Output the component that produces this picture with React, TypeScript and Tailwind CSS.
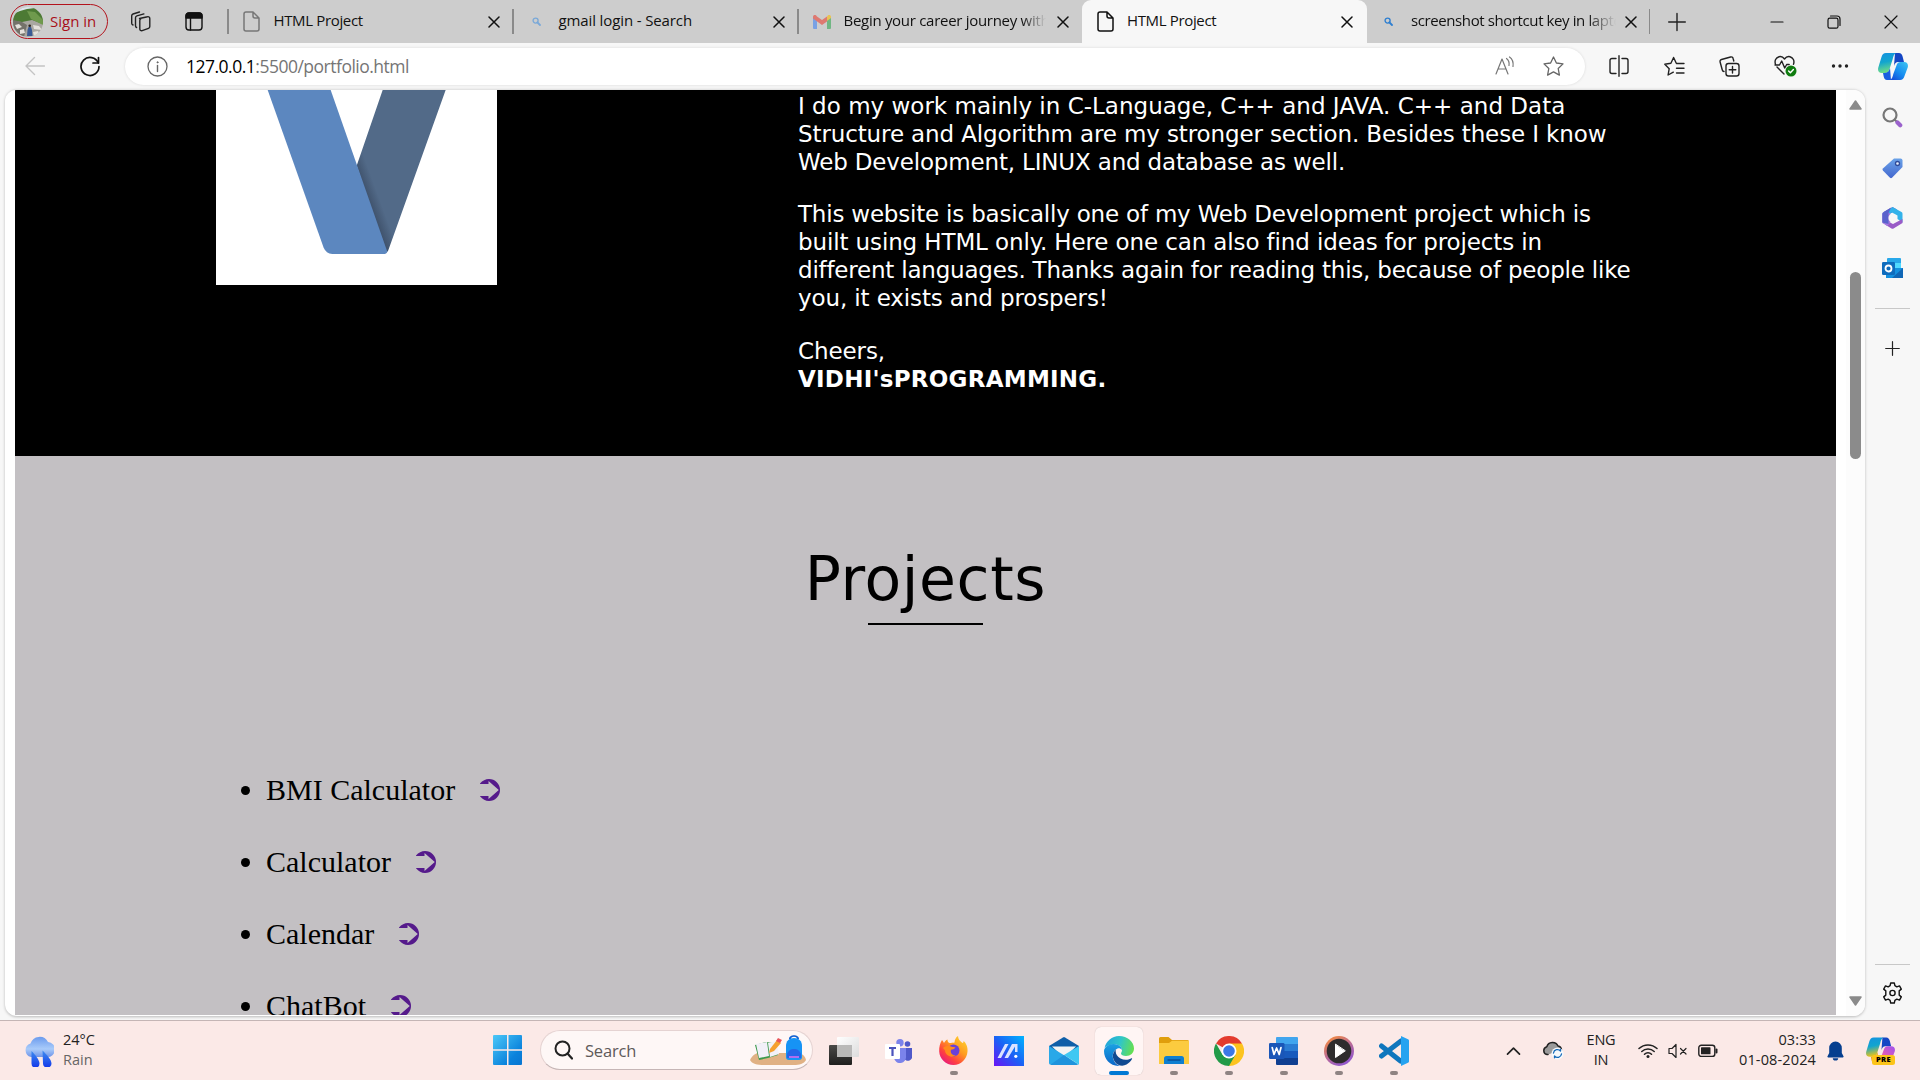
import React from "react";

type P = { children?: React.ReactNode; w?: number; h?: number; vb?: string; className?: string };

const Svg = ({ children, w = 20, h = 20, vb, className = "" }: P) => (
  <svg
    width={w}
    height={h}
    viewBox={vb ?? `0 0 ${w} ${h}`}
    fill="none"
    stroke="currentColor"
    strokeWidth="1.4"
    strokeLinecap="round"
    strokeLinejoin="round"
    className={"block shrink-0 " + className}
  >
    {children}
  </svg>
);

const CloseX = () => (
  <Svg w={12} h={12} className="text-[#111]">
    <path d="M1 1l10 10M11 1L1 11" strokeWidth="1.5" />
  </Svg>
);

const DocIcon = ({ className = "" }: { className?: string }) => (
  <Svg w={17} h={21} className={className}>
    <path d="M3 1h7l6 6v11a2 2 0 0 1-2 2H3a2 2 0 0 1-2-2V3a2 2 0 0 1 2-2z M10 1v4a2 2 0 0 0 2 2h4" strokeWidth="1.5" />
  </Svg>
);

const MiniSearch = ({ className = "" }: { className?: string }) => (
  <Svg w={9} h={9} className={className}>
    <circle cx="3.6" cy="3.6" r="2.5" />
    <path d="M5.5 5.5L8 8" strokeWidth="1.8" />
  </Svg>
);

const Gmail = () => (
  <Svg w={18} h={14} className="opacity-60">
    <g stroke="none">
      <path d="M0 2v11a1 1 0 0 0 1 1h3V5z" fill="#4285f4" />
      <path d="M14 5v9h3a1 1 0 0 0 1-1V2z" fill="#34a853" />
      <path d="M14 1.5V6l4-3V2c0-2-2-2.500-3.200-1.500z" fill="#fbbc04" />
      <path d="M4 1.500L9 5l5-3.500V6.500L9 10 0 3.500V2C0 0 2-.5 3.200.5z" fill="#ea4335" />
    </g>
  </Svg>
);

const Sep = () => <div className="h-[25px] w-[1.5px] shrink-0 bg-[#8a8a8a]" />;

function TabStrip() {
  return (
    <div className="flex h-[43px] items-center bg-[#cdcdcd] text-[15px] leading-[20px] text-[#111]">
      <div className="flex w-[227px] shrink-0 items-center pl-[10px]">
        <div className="mr-[22px] flex h-[35px] w-[98px] items-center rounded-full border-[1.5px] border-[#b3131d] pl-[2px] text-[#a80f1a]">
          <Svg w={30} h={30}>
            <clipPath id="av"><circle cx="15" cy="15" r="15" /></clipPath>
            <g clipPath="url(#av)" stroke="none">
              <path d="M0 0h30v30H0z" fill="#a9a7a1" />
              <path d="M0 0h30v8l-8-5-9 3-7 4-6-3z" fill="#dde6ee" />
              <path d="M0 7l7-3 7-2 8-1 8 7v9L19 13 9 15 0 14z" fill="#4c7a34" />
              <path d="M14 4l8 1 8 8v5l-12-6z" fill="#6f9a4d" />
              <path d="M0 13l9 2 5 3-3 12H0z" fill="#74726a" />
              <path d="M2 18l4-1 3 3-5 2z M7 23l4-1 1 4-5 1z M20 18l6 1 3 4-8-1z M20 25l5-1 2 4-6 1z" fill="#e4e1dc" />
              <path d="M15.500 20h2.500l1 3 .5 6h-5.500l.5-6z" fill="#3a5a94" />
              <circle cx="16.700" cy="18.800" r="1.300" fill="#2b211c" />
            </g>
          </Svg>
          <span className="mt-[-2px] ml-[7px] tracking-[0px]">Sign in</span>
        </div>
        <Svg w={22} h={22} className="mr-[33px] text-[#222]">
          <path d="M9.500 7.500l8-1.800a1.800 1.800 0 0 1 2.300 1.700v8.100a2 2 0 0 1-1.300 1.900l-6.300 2.300a1.800 1.800 0 0 1-2.400-1.700V9.500a2 2 0 0 1 1.300-1.900z M6.600 16.500a2 2 0 0 1-1.100-1.800V6.800a2 2 0 0 1 1.400-1.900l7-2 M3 14a2 2 0 0 1-1.300-1.800V4.800A2 2 0 0 1 3 3l6.500-2" />
        </Svg>
        <Svg w={18} h={19} className="text-[#111]">
          <rect x="1" y="1" width="16" height="17" rx="3" />
          <path d="M1 6V4a3 3 0 0 1 3-3h10a3 3 0 0 1 3 3v2z" fill="currentColor" />
          <path d="M5.500 6v12" />
        </Svg>
      </div>
      <Sep />
      <div className="flex w-[283.500px] shrink-0 items-center pl-[14px]">
        <DocIcon className="text-[#777]" />
        <span className="mt-[-3px] ml-[14px] w-[214px] shrink-0 tracking-[-0.35px]">HTML Project</span>
        <CloseX />
      </div>
      <Sep />
      <div className="flex w-[283.500px] shrink-0 items-center pl-[18px]">
        <MiniSearch className="text-[#7ba9d8]" />
        <span className="mt-[-3px] ml-[18px] w-[214px] shrink-0 tracking-[-0.12px]">gmail login - Search</span>
        <CloseX />
      </div>
      <Sep />
      <div className="flex w-[283.500px] shrink-0 items-center pl-[14px]">
        <Gmail />
        <span className="mt-[-3px] mr-[11px] ml-[13px] w-[202px] shrink-0 overflow-hidden [mask-image:linear-gradient(to_right,black_88%,transparent)] whitespace-nowrap tracking-[-0.29px]">
          Begin your career journey with us
        </span>
        <CloseX />
      </div>
      <div className="flex h-[43px] w-[285px] shrink-0 items-center rounded-t-[9px] bg-[#f7f7f7] pl-[15px]">
        <DocIcon className="text-[#111]" />
        <span className="mt-[-3px] ml-[13px] w-[214px] shrink-0 tracking-[-0.35px]">HTML Project</span>
        <CloseX />
      </div>
      <div className="flex w-[281.500px] shrink-0 items-center pl-[17px]">
        <MiniSearch className="text-[#2f7fd0]" />
        <span className="mt-[-3px] mr-[9px] ml-[18px] w-[205px] shrink-0 overflow-hidden [mask-image:linear-gradient(to_right,black_86%,transparent)] whitespace-nowrap tracking-[-0.4px]">
          screenshot shortcut key in laptop
        </span>
        <CloseX />
      </div>
      <Sep />
      <Svg w={18} h={20} className="ml-[18px] text-[#222]"><path d="M9 1.500v17M.7 10h16.600" /></Svg>
      <Svg w={14} h={14} className="ml-[84px] text-[#111]"><path d="M1 7h12" strokeWidth="1.200" /></Svg>
      <Svg w={14} h={14} className="ml-[43px] text-[#111]">
        <rect x="1" y="3.200" width="10" height="10" rx="1.800" strokeWidth="1.200" />
        <path d="M3.500 1h6.500a3 3 0 0 1 3 3v6.500" strokeWidth="1.200" />
      </Svg>
      <Svg w={14} h={14} className="ml-[43px] text-[#111]"><path d="M1 1l12 12M13 1L1 13" strokeWidth="1.200" /></Svg>
    </div>
  );
}

const Copilot = ({ w = 30, h = 27, warm = false }: { w?: number; h?: number; warm?: boolean }) => {
  const id = warm ? "w" : "c";
  return (
    <Svg w={w} h={h} vb="0 0 30 27">
      <defs>
        <linearGradient id={"cpa" + id} x1="0" y1="0" x2=".2" y2="1">
          <stop offset="0" stopColor="#1491e0" />
          <stop offset=".5" stopColor="#12a5cf" />
          <stop offset="1" stopColor={warm ? "#e8c41a" : "#6fdc86"} />
        </linearGradient>
        <linearGradient id={"cpb" + id} x1="1" y1="0" x2=".2" y2="1">
          <stop offset="0" stopColor={warm ? "#9b53f0" : "#3fc6f2"} />
          <stop offset=".6" stopColor={warm ? "#e25ab8" : "#168cf0"} />
          <stop offset="1" stopColor={warm ? "#f58a4a" : "#1550d8"} />
        </linearGradient>
      </defs>
      <g stroke="none">
        <path d="M17 0h4c2 0 3 1.500 3.600 3.500L26 9h-6c-2 0-3 1-4 4z" fill="#1546c4" />
        <path d="M8 0h10c-2 1-2.600 3-3.300 6l-3 9.500c-.8 2.500-1.700 4.500-5 4.500H4c-3.500 0-4.500-2.500-3.700-5.500L3.500 4C4.300 1.500 5.500 0 8 0z" fill={`url(#cpa${id})`} />
        <path d="M13 27H9c-2 0-2.800-1.500-3.300-3.500L5 20c5 0 6-2 7-5z" fill={warm ? "#e8a22a" : "#1a5de0"} />
        <path d="M22 27H12c2-1 2.600-3 3.300-6l3-8c.8-2.500 1.700-4 4.500-4H26c3.500 0 4.500 2.500 3.700 5.500L26.500 23c-.8 2.500-2 4-4.500 4z" fill={`url(#cpb${id})`} />
      </g>
    </Svg>
  );
};

function Toolbar() {
  return (
    <div className="flex h-[46px] items-center bg-[#f7f7f7] pl-[25px] text-[#222]">
      <Svg w={20} h={20} className="mr-[35px] text-[#c4c4c4]"><path d="M19.500 10H1M9.500 1.500L1 10l8.500 8.500" /></Svg>
      <Svg w={20} h={22} className="mr-[25px] text-[#111]">
        <path d="M18.300 8A9 9 0 1 0 19 11.500" strokeWidth="1.700" />
        <path d="M18.500 2.500V8h-5.500" strokeWidth="1.700" />
      </Svg>
      <div className="flex h-[37px] w-[1460px] shrink-0 items-center rounded-full bg-white pl-[22px] shadow-[0_0_3px_rgba(0,0,0,0.12)]">
        <Svg w={21} h={21} className="text-[#666]">
          <circle cx="10.500" cy="10.500" r="9.500" strokeWidth="1.300" />
          <path d="M10.500 9.500v6" />
          <circle cx="10.500" cy="6.300" r=".6" fill="currentColor" strokeWidth=".8" />
        </Svg>
        <div className="ml-[18px] w-[1309px] shrink-0 text-[17.500px] leading-[24px] tracking-[-0.5px] text-[#757575]">
          <span className="text-black">127.0.0.1</span>:5500/portfolio.html
        </div>
        <Svg w={20} h={20} className="text-[#777]">
          <path d="M1 18L7 3l6 15M3 13h8M11.500 2.500c2 1.500 3 4 2.500 7M14.500 1c3 2 4 5.500 3.500 9.500" strokeWidth="1.200" />
        </Svg>
        <Svg w={21} h={20} className="ml-[28px] text-[#666]">
          <path d="M10.500 1l2.900 6 6.600.9-4.800 4.600 1.200 6.600-5.900-3.200-5.900 3.200 1.200-6.600L1 7.900 7.600 7z" strokeWidth="1.300" />
        </Svg>
      </div>
      <Svg w={20} h={22} className="ml-[24px]">
        <path d="M7 3.500H3a2 2 0 0 0-2 2v11a2 2 0 0 0 2 2h4M13 3.500h4a2 2 0 0 1 2 2v11a2 2 0 0 1-2 2h-4M10 .8v20.400" />
      </Svg>
      <Svg w={21} h={21} className="ml-[35px]">
        <path d="M12.300 7.200L9.600 1.500 6.900 7.200.8 8.200l4.400 4.500-1.100 6.300 5.200-2.800M12.500 7.500h7.500M12.500 12.200h7.500M12.500 17h7.500" />
      </Svg>
      <Svg w={21} h={21} className="ml-[34px]">
        <rect x="7" y="7.500" width="13" height="12.500" rx="2.500" />
        <path d="M13.500 10.500v6.500M10.200 13.700h6.600M14.800 5l-.7-2.500a2 2 0 0 0-2.500-1.500L2.500 3.500A2 2 0 0 0 1.100 6l2.200 8a2 2 0 0 0 1.700 1.500" />
      </Svg>
      <Svg w={23} h={22} className="ml-[34px]">
        <path d="M1.500 9.500C.3 6 1.800 2.500 5 1.700c2.200-.6 4.200.5 5.500 2.300 1.300-1.800 3.300-2.900 5.500-2.300 3.200.8 4.700 4.300 3.500 7.600M3 12l7 7M1 10h4.500l2.200-4 3 7 2-3.500h2.500" />
        <circle cx="17" cy="16" r="5.500" fill="#107c10" stroke="none" />
        <path d="M14.600 16l1.800 1.800 3-3.300" stroke="#fff" />
      </Svg>
      <Svg w={18} h={6} className="ml-[34px]">
        <g fill="#222" stroke="none"><circle cx="2.500" cy="3" r="1.700" /><circle cx="9" cy="3" r="1.700" /><circle cx="15.500" cy="3" r="1.700" /></g>
      </Svg>
      <div className="ml-[29px]"><Copilot /></div>
    </div>
  );
}

const projects = ["BMI Calculator", "Calculator", "Calendar", "ChatBot"];

function PortfolioPage() {
  return (
    <div className="h-[925px] w-[1821px] shrink-0 overflow-hidden bg-[#c3c0c3]">
      <section className="flex h-[366px] items-start bg-black pl-[201px]">
        <svg width="281" height="195" viewBox="48 30 843 585" className="block shrink-0 bg-white">
          <defs>
            <linearGradient id="fold" gradientUnits="userSpaceOnUse" x1="515" y1="385" x2="545" y2="374">
              <stop offset="0" stopColor="#40536d" />
              <stop offset="1" stopColor="#526a88" />
            </linearGradient>
          </defs>
          <path d="M548 30H737L566 508Q563 518 556 518L470 257z" fill="url(#fold)" />
          <path d="M203 30H392L562 515Q560 522 550 522H397Q378 520 371 503z" fill="#5c87bf" />
        </svg>
        <div className="ml-[301px] pt-[2px] text-[23px] leading-[28px] whitespace-nowrap text-white [font-family:'DejaVu_Sans',sans-serif]">
          <div className="mb-[24px]">
            <p className="tracking-[0.01px]">I do my work mainly in C-Language, C++ and JAVA. C++ and Data</p>
            <p className="tracking-[-0.12px]">Structure and Algorithm are my stronger section. Besides these I know</p>
            <p className="tracking-[-0.17px]">Web Development, LINUX and database as well.</p>
          </div>
          <div className="mb-[25px]">
            <p className="tracking-[-0.2px]">This website is basically one of my Web Development project which is</p>
            <p className="tracking-[-0.12px]">built using HTML only. Here one can also find ideas for projects in</p>
            <p className="tracking-[-0.21px]">different languages. Thanks again for reading this, because of people like</p>
            <p className="tracking-[-0.12px]">you, it exists and prospers!</p>
          </div>
          <p className="tracking-[-0.1px]">Cheers,</p>
          <p className="font-bold tracking-[0.25px]">VIDHI'sPROGRAMMING.</p>
        </div>
      </section>
      <section>
        <div className="flex flex-col items-center pt-[86px]">
          <h1 className="text-[60px] leading-[74px] tracking-[0.6px] [font-family:'DejaVu_Sans',sans-serif]">Projects</h1>
          <div className="mt-[7px] h-[2px] w-[115px] bg-black" />
        </div>
        <ul className="pt-[129px] pl-[228px] text-[30px] leading-[72px] text-black [font-family:'Liberation_Serif',serif]">
          {projects.map((p) => (
            <li key={p} className="flex h-[72px] items-center">
              <span className="mt-[1px] mr-[16px] ml-[-2px] size-[9px] rounded-full bg-black" />
              <span>{p}</span>
              <a className="mt-[-1px] ml-[25px] text-[#551a8b]">
                <Svg w={20} h={22}>
                  <path d="M0 4.500C2.500 1.500 5.500 0 9 0A11 11 0 0 1 9 22C5.500 22 2.500 20.500 0 17.300V17H8.500V20L18.800 11 8.500 2V4.900H0z" fill="currentColor" stroke="none" />
                </Svg>
              </a>
            </li>
          ))}
        </ul>
      </section>
    </div>
  );
}

function Sidebar() {
  return (
    <div className="flex h-[931px] w-[54px] shrink-0 flex-col items-center pt-[18px] text-[#222]">
      <Svg w={21} h={21}>
        <circle cx="8" cy="8" r="6.500" stroke="#777" strokeWidth="2.200" />
        <path d="M12.800 12.800l2 2" stroke="#777" strokeWidth="2" />
        <path d="M15.500 15.500l2.700 2.700" stroke="#9b62cc" strokeWidth="4.200" />
      </Svg>
      <Svg w={21} h={21} className="mt-[30px]">
        <defs><linearGradient id="tg" x1="0" y1="0" x2="0" y2="1"><stop offset="0" stopColor="#6aa2e8" /><stop offset="1" stopColor="#4468cf" /></linearGradient></defs>
        <path d="M12 .5h6.500a2 2 0 0 1 2 2V9L10 19.700a1.500 1.500 0 0 1-2 0L.9 12.600a1.500 1.500 0 0 1 0-2z" fill="url(#tg)" stroke="none" />
        <circle cx="15.500" cy="5.500" r="2" fill="#e8f0fb" stroke="#2f4a99" strokeWidth="1.300" />
      </Svg>
      <Svg w={21} h={22} className="mt-[28px]">
        <g stroke="none">
          <path d="M10.500 0L1.500 5v11l4.500 3V8l4.500-2.800L15 2.500z" fill="#6468cf" />
          <path d="M10.500 0l9 5a2 2 0 0 1 1 2v8.500l-5-3.500V8.500L10 5.500 7 7V3z" fill="#33b2ea" />
          <path d="M20.500 12v4l-9 5.500a2 2 0 0 1-2 0L3 17.500l5-2 3 1.500z" fill="#9a5bc7" />
          <path d="M.3 7v9l5 3 3-3.500V7L5 3.500z" fill="#a67be0" />
          <path d="M.3 6L9 .5 6.500 6v11L.3 15.500z" fill="#5a62cc" />
          <circle cx="10.500" cy="11" r="4" fill="#f7f7f7" />
        </g>
      </Svg>
      <Svg w={21} h={21} className="mt-[29px]">
        <g stroke="none">
          <rect x="5" y="0" width="14" height="16" rx="1" fill="#28a8ea" />
          <path d="M5 5h7v5H5z" fill="#0364b8" /><path d="M12 5h7v6h-7z" fill="#50d9ff" />
          <path d="M4 10h17v10H4z" fill="#1490df" /><path d="M10 20L21 10v10z" fill="#1066b5" />
          <rect x="0" y="4" width="13" height="13" rx="1.300" fill="#0f6cbd" />
        </g>
        <circle cx="6.500" cy="10.500" r="3" stroke="#fff" strokeWidth="1.800" />
      </Svg>
      <div className="mt-[29px] h-px w-[35px] bg-[#c8c8c8]" />
      <Svg w={15} h={15} className="mt-[32px]"><path d="M7.500 .7v13.600M.7 7.500h13.600" strokeWidth="1.200" /></Svg>
      <div className="mt-auto h-px w-[35px] shrink-0 bg-[#c8c8c8]" />
      <Svg w={21} h={22} vb="0 0 21 22" className="mt-[17px] mb-[16px] text-[#111]">
        <path d="M8.700 1h3.600l.6 2.700 1.900 1.100 2.700-.9 1.800 3.200-2.100 1.800v4.200l2.100 1.800-1.800 3.200-2.700-.9-1.900 1.100-.6 2.700H8.700l-.6-2.700-1.900-1.100-2.700.9-1.800-3.200 2.100-1.800V8.900L1.700 7.100l1.800-3.200 2.700.9 1.900-1.100z" />
        <circle cx="10.500" cy="11" r="2.600" />
      </Svg>
    </div>
  );
}

function Browser() {
  return (
    <div className="flex h-[931px] bg-[#f7f7f7] pl-[5px]">
      <div className="flex h-[927px] w-[1860px] shrink-0 overflow-hidden rounded-[12px] border-t border-[#e3e3e3] bg-white pl-[10px] shadow-[0_1px_3px_rgba(0,0,0,0.25)]">
        <PortfolioPage />
        <div className="ml-[10px] flex w-[19px] shrink-0 flex-col items-center bg-[#fcfcfc] pt-[10px]">
          <Svg w={13} h={10}><path d="M6.500 1L12 9H1z" fill="#8b8b8b" stroke="#8b8b8b" strokeWidth="1.500" /></Svg>
          <div className="mt-[162px] h-[187px] w-[11px] rounded-full bg-[#8b8b8b]" />
          <Svg w={13} h={10} className="mt-auto mb-[10px]"><path d="M6.500 9L1 1h11z" fill="#8b8b8b" stroke="#8b8b8b" strokeWidth="1.500" /></Svg>
        </div>
      </div>
      <Sidebar />
    </div>
  );
}

const TaskIcon = ({ children, run = false, active = false }: { children: React.ReactNode; run?: boolean; active?: boolean }) => (
  <div className="flex w-[55px] shrink-0 justify-center">
    <div className={active ? "flex h-[48px] w-[48px] flex-col items-center rounded-[6px] bg-[#fff5f4] pt-[9px] shadow-[0_0_1px_rgba(0,0,0,0.25)]" : "flex h-[48px] w-[48px] flex-col items-center pt-[9px]"}>
      <div className="flex h-[30px] items-center">{children}</div>
      {active ? <div className="mt-[5px] h-[4px] w-[20px] shrink-0 rounded-full bg-[#0078d4]" /> : null}
      {run ? <div className="mt-[5px] h-[4px] w-[8px] shrink-0 rounded-full bg-[#8f8483]" /> : null}
    </div>
  </div>
);

function Pinned() {
  return (
    <>
      <TaskIcon>
        <Svg w={30} h={28}>
          <defs>
            <linearGradient id="tv" x1="0" y1="0" x2="0" y2="1"><stop offset="0" stopColor="#4a4a48" /><stop offset="1" stopColor="#1f1f1e" /></linearGradient>
            <linearGradient id="tv2" x1="0" y1="0" x2="1" y2="1"><stop offset="0" stopColor="#fff" /><stop offset="1" stopColor="#dcdcdc" /></linearGradient>
          </defs>
          <g stroke="none">
            <rect x="0" y="8" width="23" height="20" rx="1" fill="url(#tv)" />
            <rect x="8" y="0" width="22" height="20" rx="1" fill="url(#tv2)" />
            <rect x="8" y="8" width="15" height="12" fill="#b9b9b8" />
          </g>
        </Svg>
      </TaskIcon>
      <TaskIcon>
        <Svg w={27} h={24}>
          <g stroke="none">
            <circle cx="22.500" cy="5" r="2.800" fill="#5059c9" />
            <path d="M19 9h8v7a4 4 0 0 1-8 3z" fill="#5059c9" />
            <circle cx="15" cy="3.700" r="3.700" fill="#7b83eb" />
            <path d="M9 9h12v8a6 6 0 0 1-12 2z" fill="#7b83eb" />
            <rect x="0" y="5" width="15" height="15" rx="1" fill="#fff" />
          </g>
          <path d="M4 9h7M7.500 9v8" stroke="#4b53bc" strokeWidth="2.200" strokeLinecap="butt" />
        </Svg>
      </TaskIcon>
      <TaskIcon run>
        <Svg w={29} h={29}>
          <defs>
            <linearGradient id="ff" x1="1" y1="0" x2=".2" y2="1"><stop offset="0" stopColor="#ffe033" /><stop offset=".45" stopColor="#ff9a1f" /><stop offset=".75" stopColor="#ff4040" /><stop offset="1" stopColor="#e31587" /></linearGradient>
          </defs>
          <g stroke="none">
            <path d="M3 4c1 1 1.500 2 2 3 .7-1.500 2-3 3.500-3.500 0 2 .5 3 2 3.500 2 0 3-.2 5-.5C15.500 4 17 1 19 0c0 3 2 5 4.500 7 1-.2 1-1 1-2C27 7 29 11 28.500 15.500 28 23 22 29 14.500 29S.5 23 .2 15.500C0 11 1 7 3 4z" fill="url(#ff)" />
            <circle cx="14.500" cy="14.500" r="6" fill="#6a40d8" />
            <path d="M4 12c2-2 5-2.500 8-1.500 2 .7 3 .5 4.500.8-1 2-3 2.200-4.500 2.500-1 3 1 6 5 5.500-5 3.500-11-.3-11-5z" fill="#ff8a1c" />
          </g>
        </Svg>
      </TaskIcon>
      <TaskIcon>
        <Svg w={30} h={30}>
          <defs><linearGradient id="as" x1="1" y1="0" x2="0" y2="1"><stop offset="0" stopColor="#00b4ff" /><stop offset=".5" stopColor="#1a62f5" /><stop offset="1" stopColor="#6a12f5" /></linearGradient></defs>
          <path d="M0 0h30v30H0z" fill="url(#as)" stroke="none" />
          <path d="M3.500 22L11 8h3.500L7 22z M10.500 22L18 8h5.500v8h-2.500V10.500L14 22z" fill="#dbe2ff" stroke="none" />
          <circle cx="21.800" cy="20.300" r="1.600" fill="#fff" stroke="none" />
        </Svg>
      </TaskIcon>
      <TaskIcon>
        <Svg w={30} h={28}>
          <g stroke="none">
            <path d="M0 9L14 .4a2 2 0 0 1 2 0L30 9v8H0z" fill="#0f5ea8" />
            <path d="M3 9.500h24L18 18h-6z" fill="#f3f3f3" />
            <path d="M0 9l30 18.500H1.500A1.500 1.500 0 0 1 0 26z" fill="#28a8e8" />
            <path d="M30 9L15 18l15 9.500z" fill="#3fc8f2" />
            <path d="M15 18L1 28h28z" fill="#1f93dc" />
          </g>
        </Svg>
      </TaskIcon>
      <TaskIcon active>
        <Svg w={30} h={30}>
          <defs>
            <linearGradient id="e1" x1="0" y1=".4" x2="1" y2=".6"><stop offset="0" stopColor="#22a5dc" /><stop offset=".5" stopColor="#30c6c8" /><stop offset="1" stopColor="#66e04c" /></linearGradient>
            <linearGradient id="e2" x1="0" y1="0" x2="0" y2="1"><stop offset="0" stopColor="#1ba1e2" /><stop offset="1" stopColor="#0b66c8" /></linearGradient>
          </defs>
          <g stroke="none">
            <path d="M.5 12C2 5 8 0 15 0c8.500 0 15 6 15 12.500 0 4.500-3.500 7.500-8 7.500-3 0-5-1-5-2.500 0-1 1-1.300 1-3.500 0-3-3-5.500-7-5.500C6 8.500 2 10 .5 12z" fill="url(#e1)" />
            <path d="M0 15C.3 11 4.500 8 9.500 8c5 0 8.500 3 8.500 6-1-1.500-3-2-4.500-1.500C10 14 8 18 9 22c1 4.500 4 7.300 7.500 8C7 30.500 0 24 0 15z" fill="url(#e2)" />
            <path d="M12 13.500C8 17 8 22 11 26c3 4 8 4.500 11.500 2.500 2.500-1.400 4.500-3.500 5.500-5.500.4-.8-.3-1-1-.6-3 1.600-7 1.800-10.500 0C12.500 20.500 11 17 12 13.500z" fill="#114a91" />
          </g>
        </Svg>
      </TaskIcon>
      <TaskIcon run>
        <Svg w={30} h={27}>
          <g stroke="none">
            <path d="M0 1.500A1.500 1.500 0 0 1 1.500 0h8L13 3h15.500A1.500 1.500 0 0 1 30 4.500V10H0z" fill="#e09e0c" />
            <path d="M0 6h10l3-2.200h17V27H0z" fill="#fccb3f" />
            <path d="M5 27v-5.500A2.500 2.500 0 0 1 7.500 19h15a2.500 2.500 0 0 1 2.500 2.500V27z" fill="#0f7fd0" />
          </g>
          <path d="M9 23h12" stroke="#0b4f94" strokeWidth="1.300" />
        </Svg>
      </TaskIcon>
      <TaskIcon run>
        <Svg w={30} h={30}>
          <g stroke="none">
            <path d="M15 15L2 7.500A15 15 0 0 1 28 7.500z" fill="#e33b2e" />
            <path d="M15 15V7.500h13A15 15 0 0 1 15 30z" fill="#fcc31e" />
            <path d="M2 7.500L8.500 18.700 15 15l6.500 3.700L15 30A15 15 0 0 1 2 7.500z" fill="#229a48" />
            <circle cx="15" cy="15" r="7.500" fill="#fff" />
            <circle cx="15" cy="15" r="5.800" fill="#3b78e7" />
          </g>
        </Svg>
      </TaskIcon>
      <TaskIcon run>
        <Svg w={30} h={28}>
          <g stroke="none">
            <path d="M7 1a1 1 0 0 1 1-1h20a1 1 0 0 1 1 1v6H7z" fill="#41a5ee" />
            <path d="M7 7h22v7H7z" fill="#2b7cd3" /><path d="M7 14h22v7H7z" fill="#185abd" />
            <path d="M7 21h22v6a1 1 0 0 1-1 1H8a1 1 0 0 1-1-1z" fill="#103f91" />
            <rect x="0" y="6" width="15.500" height="16" rx="1.300" fill="#1a56b8" />
          </g>
          <path d="M3.200 10.500l1.800 7 2.600-6.500 2.600 6.500 1.800-7" stroke="#fff" strokeWidth="1.700" />
        </Svg>
      </TaskIcon>
      <TaskIcon run>
        <Svg w={30} h={30}>
          <defs><linearGradient id="mp" x1=".2" y1="0" x2=".8" y2="1"><stop offset="0" stopColor="#f58a3c" /><stop offset=".5" stopColor="#b86a9a" /><stop offset="1" stopColor="#8a54d8" /></linearGradient></defs>
          <circle cx="15" cy="15" r="15" fill="url(#mp)" stroke="none" />
          <circle cx="15" cy="15" r="12.300" fill="#2e2c2d" stroke="none" />
          <path d="M11.500 8.500v13L21 15z" fill="#fff" stroke="#fff" strokeWidth="1" />
        </Svg>
      </TaskIcon>
      <TaskIcon run>
        <Svg w={30} h={30}>
          <path d="M2.500 10l19 15M2.500 20L22 5" stroke="#0f76bd" strokeWidth="5" />
          <path d="M22 0l7 3.200a1.500 1.500 0 0 1 1 1.500v20.600a1.500 1.500 0 0 1-1 1.500L22 30z" fill="#26a3f0" stroke="none" />
          <path d="M22 9v12l-8-6z" fill="#fbe9e7" stroke="none" />
        </Svg>
      </TaskIcon>
    </>
  );
}

function Taskbar() {
  return (
    <div className="flex h-[60px] items-center border-t-[1.500px] border-[#c4b5b5] bg-[#fbe9e7] text-[#222]">
      <div className="flex w-[493px] shrink-0 items-center pl-[24px]">
        <Svg w={30} h={33}>
          <defs>
            <linearGradient id="cl" x1="0" y1="0" x2="0" y2="1"><stop offset="0" stopColor="#6b9bee" /><stop offset=".6" stopColor="#a9cbfa" /><stop offset="1" stopColor="#6f94e8" /></linearGradient>
            <linearGradient id="dr" x1="0" y1="0" x2="0" y2="1"><stop offset="0" stopColor="#3f8ef0" /><stop offset="1" stopColor="#1238ea" /></linearGradient>
          </defs>
          <path d="M7 23a7 7 0 0 1-.5-13.500A9.500 9.500 0 0 1 24 8a7.500 7.500 0 0 1-1 15z" fill="url(#cl)" stroke="none" />
          <path d="M7.500 17c4 4 8 9 8 12.500a4 4 0 0 1-8 0zM18.500 16.500c4 4 9 9 9 13a4.200 4.200 0 0 1-8.500 0z" fill="url(#dr)" stroke="none" />
        </Svg>
        <div className="mt-[-2px] ml-[9px] text-[14.500px] leading-[20px] tracking-[0px]">
          <div>24°C</div>
          <div className="text-[#666]">Rain</div>
        </div>
      </div>
      <Svg w={30} h={30} className="mt-[-1px]">
        <defs><linearGradient id="wn" gradientUnits="userSpaceOnUse" x1="0" y1="0" x2="30" y2="30"><stop offset="0" stopColor="#4cc8f8" /><stop offset=".7" stopColor="#0a82dc" /><stop offset="1" stopColor="#0874d0" /></linearGradient></defs>
        <path d="M0 1a1 1 0 0 1 1-1h13v14.200H0zM15.500 0H28a1 1 0 0 1 1 1v13.200H15.500zM0 15.700h14V30H1a1 1 0 0 1-1-1zM15.500 15.700H29V29a1 1 0 0 1-1 1H15.500z" fill="url(#wn)" stroke="none" />
      </Svg>
      <div className="mt-[-1px] ml-[17px] flex h-[40px] w-[273px] shrink-0 items-center rounded-full border border-[#e5d3d2] border-b-[#c6b6b6] bg-[#fef7f6] pl-[13px]">
        <Svg w={19} h={20}><circle cx="8.500" cy="8.500" r="7" strokeWidth="2" /><path d="M13.500 13.500l4.500 5" strokeWidth="2.200" /></Svg>
        <span className="mt-[1px] ml-[12px] w-[165px] shrink-0 text-[16.500px] leading-[20px] tracking-[-0.2px] text-[#5f5a5a]">Search</span>
        <Svg w={57} h={32}>
          <g stroke="none">
            <path d="M0 26c2-4 5-7 9-7h39c4 0 7 3 8 7-2 4-7 5-12 5H14C7 31 2 30 0 26z" fill="#e0b184" />
            <path d="M5 11l11-3 9 1 3 12-10 3-9 2z" fill="#3d9a4c" />
            <path d="M6 10l11-2 2 14-10 2zM18 9l8-2 3 13-9 3z" fill="#f2f0f8" />
            <path d="M20 15l7-9 4 3-7 8-5 2z" fill="#f5a030" /><path d="M26 7l2-3 4 2-2 3z" fill="#e9565a" />
            <path d="M39 5c0-5 10-5 10 0h-2c0-3-6-3-6 0z" fill="#1261d2" />
            <path d="M36 12c0-5 3-8 8-8s8 3 8 8v11a3 3 0 0 1-3 3H39a3 3 0 0 1-3-3z" fill="#1693f5" />
            <path d="M37 21c1-5 4-6 7-6s6 1 7 6v3H37z" fill="#2565e8" /><path d="M39 22h10v2H39z" fill="#b06cf0" />
          </g>
        </Svg>
      </div>
      <div className="ml-[3px] flex w-[605px] shrink-0"><Pinned /></div>
      <div className="ml-[85px] flex items-center">
        <Svg w={15} h={10}><path d="M1.500 8.200l6-6 6 6" strokeWidth="1.700" /></Svg>
        <Svg w={22} h={19} className="ml-[21px]">
          <path d="M6 13.500H5A4 4 0 0 1 4.800 5.700 6 6 0 0 1 16 5a4.300 4.300 0 0 1 3.500 4" fill="#9a9a9a" strokeWidth="1.500" />
          <circle cx="15.500" cy="12.500" r="6" fill="#f6f9fc" stroke="none" />
          <path d="M11.500 12a4 4 0 0 1 7-2V8.200M19.500 13a4 4 0 0 1-7 2v1.800" stroke="#1468b8" strokeWidth="1.300" />
        </Svg>
        <div className="mt-[-1px] ml-[21px] w-[32px] text-center text-[14.500px] leading-[20px] tracking-[-0.2px]">ENG<br />IN</div>
        <Svg w={20} h={16} className="ml-[21px]">
          <path d="M1 5.500a13 13 0 0 1 18 0M3.800 8.500a9 9 0 0 1 12.400 0M6.500 11.300a5 5 0 0 1 7 0" strokeWidth="1.500" />
          <circle cx="10" cy="13.600" r="1.500" fill="currentColor" stroke="none" />
        </Svg>
        <Svg w={20} h={16} className="ml-[10px]">
          <path d="M1 5.500h3l4-4v13l-4-4H1zM12.500 5.500l5.500 5.500M18 5.500L12.500 11" strokeWidth="1.200" />
        </Svg>
        <Svg w={20} h={14} className="ml-[10px]">
          <rect x=".8" y="1.200" width="16" height="11.200" rx="2.500" strokeWidth="1.400" />
          <rect x="3" y="3.300" width="9.500" height="7" rx=".6" fill="#222" stroke="none" />
          <path d="M18.500 5.500v3" strokeWidth="2" />
        </Svg>
        <div className="mt-[-2px] ml-[17px] w-[81px] text-right text-[14.500px] leading-[20px] tracking-[0.13px] whitespace-nowrap">03:33<br />01-08-2024</div>
        <Svg w={17} h={20} className="ml-[11px]">
          <path d="M8.500 .5A6.300 6.300 0 0 1 14.800 7v5l1.700 3.200a.8.8 0 0 1-.7 1.200H1.200a.8.8 0 0 1-.7-1.200L2.200 12V7A6.300 6.300 0 0 1 8.500 .5zM5.800 17.300h5.400a2.700 2.300 0 0 1-5.400 0z" fill="#063f8f" stroke="none" />
        </Svg>
        <div className="relative ml-[22px]">
          <Copilot w={29} h={27} warm />
          <div className="absolute bottom-[-1px] left-[6px] flex h-[10px] w-[23px] items-center justify-center rounded-[2.500px] bg-[#fcc419] text-[7.500px] leading-none font-extrabold tracking-[0.3px] text-black">PRE</div>
        </div>
      </div>
    </div>
  );
}

export default function App() {
  return (
    <div className="h-[1080px] w-[1920px] overflow-hidden bg-[#f7f7f7] [font-family:'Open_Sans','Noto_Sans',sans-serif]">
      <TabStrip />
      <Toolbar />
      <Browser />
      <Taskbar />
    </div>
  );
}
